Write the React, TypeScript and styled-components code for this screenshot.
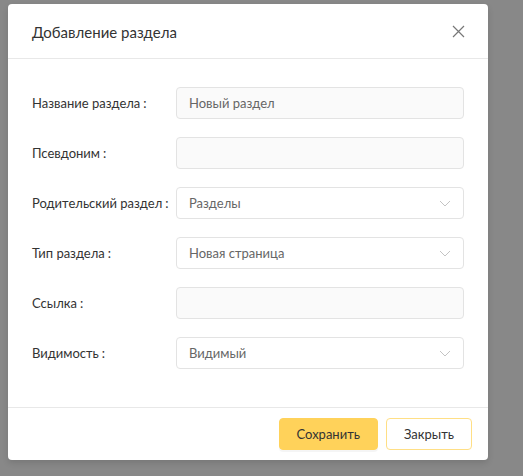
import React from "react";
import styled, { createGlobalStyle } from "styled-components";

const Global = createGlobalStyle`
  html, body { margin: 0; padding: 0; }
  body {
    background: #888888;
    font-family: "Lato", "Noto Sans", sans-serif;
    width: 523px;
    height: 476px;
    overflow: hidden;
  }
  * { box-sizing: border-box; }
`;

const Page = styled.div`
  padding: 4px 0 0 8px;
`;

const Modal = styled.div`
  width: 480px;
  height: 456px;
  background: #fff;
  border-radius: 4px;
  display: flex;
  flex-direction: column;
  box-shadow: 0 3px 6px rgba(0, 0, 0, 0.12);
`;

const Header = styled.div`
  height: 55px;
  padding: 0 22px 0 24px;
  display: flex;
  align-items: center;
  justify-content: space-between;
  border-bottom: 1px solid #e8e8e8;
`;

const Title = styled.div`
  font-size: 15px;
  color: #333;
  padding-top: 1px;
`;

const Close = styled.button`
  border: 0;
  background: transparent;
  padding: 0;
  width: 16px;
  height: 16px;
  display: flex;
  align-items: center;
  justify-content: center;
  cursor: pointer;
`;

const Body = styled.div`
  flex: 1;
  padding: 28px 24px 0 24px;
  display: flex;
  flex-direction: column;
  gap: 18px;
`;

const Row = styled.div`
  display: flex;
  align-items: center;
  height: 32px;
`;

const Label = styled.label`
  width: 144px;
  font-size: 13px;
  color: #333;
  white-space: nowrap;
  &::after {
    content: ":";
    margin: 0 0 0 3px;
  }
`;

const Field = styled.div<{ $select?: boolean }>`
  width: 288px;
  height: 32px;
  border: 1px solid #e3e3e3;
  border-radius: 4px;
  background: ${(p) => (p.$select ? "#fff" : "#fafafa")};
  display: flex;
  align-items: center;
  justify-content: space-between;
  padding: 0 12px 0 12px;
  font-size: 13px;
  color: #666;
`;

const Footer = styled.div`
  height: 53px;
  border-top: 1px solid #e8e8e8;
  display: flex;
  align-items: center;
  justify-content: flex-end;
  gap: 8px;
  padding: 0 16px;
`;

const Button = styled.button<{ $primary?: boolean }>`
  height: 32px;
  padding: 0 17px;
  border-radius: 4px;
  font-family: inherit;
  font-size: 13px;
  color: #333;
  cursor: pointer;
  background: ${(p) => (p.$primary ? "#ffd25a" : "#fff")};
  border: 1px solid ${(p) => (p.$primary ? "#ffd25a" : "#ffdf85")};
  box-shadow: ${(p) => (p.$primary ? "0 2px 0 rgba(0,0,0,0.04)" : "none")};
`;

const Chevron = () => (
  <svg width="12" height="7" viewBox="0 0 12 7" fill="none">
    <path d="M1 1l5 5 5-5" stroke="#c4c4c4" strokeWidth="1" />
  </svg>
);

const fields: { label: string; value?: string; select?: boolean }[] = [
  { label: "Название раздела", value: "Новый раздел" },
  { label: "Псевдоним" },
  { label: "Родительский раздел", value: "Разделы", select: true },
  { label: "Тип раздела", value: "Новая страница", select: true },
  { label: "Ссылка" },
  { label: "Видимость", value: "Видимый", select: true },
];

export default function App() {
  return (
    <>
      <Global />
      <Page>
        <Modal>
          <Header>
            <Title>Добавление раздела</Title>
            <Close aria-label="close">
              <svg width="13" height="13" viewBox="0 0 13 13">
                <path d="M1 1l11 11M12 1L1 12" stroke="#777" strokeWidth="1.2" />
              </svg>
            </Close>
          </Header>
          <Body>
            {fields.map((f) => (
              <Row key={f.label}>
                <Label>{f.label}</Label>
                <Field $select={f.select}>
                  <span>{f.value ?? ""}</span>
                  {f.select && <Chevron />}
                </Field>
              </Row>
            ))}
          </Body>
          <Footer>
            <Button $primary>Сохранить</Button>
            <Button>Закрыть</Button>
          </Footer>
        </Modal>
      </Page>
    </>
  );
}
